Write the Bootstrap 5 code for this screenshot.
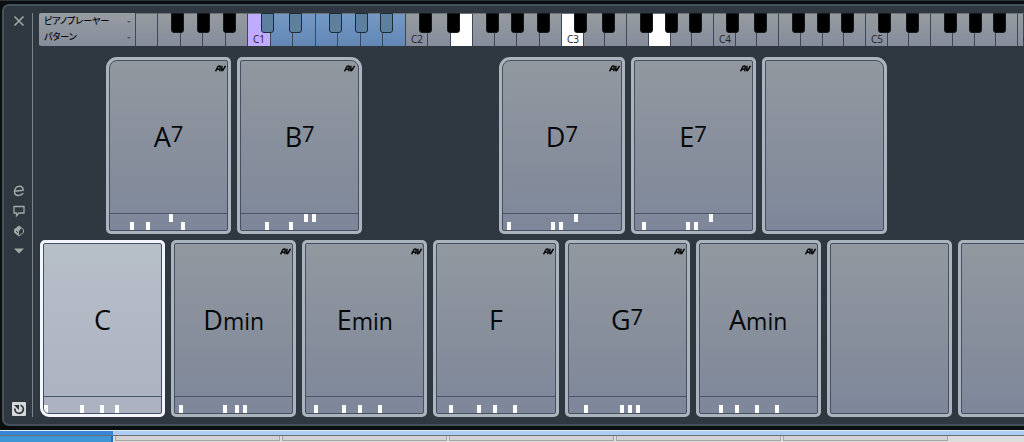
<!DOCTYPE html>
<html lang="ja">
<head>
<meta charset="utf-8">
<meta name="viewport" content="width=device-width, initial-scale=1">
<title>Chord Pads</title>
<link href="https://cdn.jsdelivr.net/npm/bootstrap@5.3.0/dist/css/bootstrap.min.css" rel="stylesheet">
<style>
body{background:#0b0e0f;font-family:"Open Sans","Noto Sans CJK JP",sans-serif;color:#050708}
.topline{height:1px;background:#2b343c;margin-bottom:3px}
.zone{margin-left:2px;background:#2f3841;border:2px solid #46515b;border-right:0;border-radius:7px 0 0 7px;padding:7px 0 7px}
.side{width:29px;border-right:1px solid #7c8388;color:#a0a9a6;padding-left:2px}
.side button,.pad,.key{padding:0;border:0;background:none;color:inherit}
.side button{line-height:0}
.side svg{display:block}
.closer{margin-top:2px}
.tools{margin-top:158px;gap:8px}
.reset{margin-top:auto;margin-bottom:1px}
.content{padding-left:6px;min-width:0}
.strip{height:33px}
.picker{width:97px;background:linear-gradient(#989da3,#868c9b);border-right:1px solid #3d475c;border-radius:2px 0 0 2px}
.picker label{display:block;height:16px;position:relative}
.picker select{display:block;width:100%;height:16px;appearance:none;border:0;background:none;padding:0 0 0 5px;font:500 9px/16px "Noto Sans CJK JP",sans-serif;font-feature-settings:"palt";color:#0a0c10}
.picker label::after{content:"";position:absolute;right:4px;top:8px;border:2px solid transparent;border-top-color:#505860;border-bottom:0}
.octave{min-width:0}
.key{flex:1 1 0;min-width:0;background:linear-gradient(#969b9f,#868c9b);border-right:1px solid #3d475c;border-top:1px solid #6c737a;display:flex;align-items:flex-end;font-size:10px;line-height:14px;padding-left:5px;color:#20242c}
.key.root{background:#c0acff}
.key.remote{background:linear-gradient(#7399c4,#6487b6)}
.key.held{background:#fff}
.ebony{position:absolute;top:0;width:13px;height:20px;padding:0;background:#000;border:1px solid #16191c;border-radius:0 0 3px 3px}
.ebony.remote{background:#5d809f;border-color:#1c2c38}
.board{display:grid;grid-template-columns:repeat(8,1fr);column-gap:6px;width:calc(100% + 58px);margin-left:1px}
.board.upper{margin-left:67px;margin-top:11px;margin-bottom:6px}
.pad{height:177px;border:3px solid #abb4bc;border-radius:5px;background:#abb4bc;display:block;color:#050708}
.face{display:flex;flex-direction:column;height:100%;border:1px solid #465063;border-radius:2px;background:linear-gradient(#92989f,#7e879a);overflow:hidden;position:relative}
.tl{border-top-left-radius:11px}.tr{border-top-right-radius:11px}.bl{border-bottom-left-radius:9px}
.tl .face{border-top-left-radius:8px}.tr .face{border-top-right-radius:8px}.bl .face{border-bottom-left-radius:6px}
.pad.lit{border-color:#f3f6fd;background:#f3f6fd}
.lit .face{background:linear-gradient(#b7bfc8,#acb1c1)}
.chord{flex:1;display:flex;justify-content:center;align-items:baseline;font-size:27px;line-height:36px;padding-top:58px}
.chord .kind{font-size:23px;line-height:30px}
.chord .seven{font-size:22px;line-height:22px;padding-bottom:5px;align-self:flex-start;padding-top:3px}
.notes{height:17px;border-top:1px solid #4b5569;position:relative;flex:none}
.notes i{position:absolute;bottom:0;width:4px;height:8px;background:#fff}
.notes i.high{bottom:8px}
.adaptive{position:absolute;right:1px;top:4px}
.tr .adaptive{right:3px}
.desk{margin-top:4px;height:13px;background:#dcdcdc}
.edge{height:6px;background:#b0cbf2;border-top:1px solid #dfeaf8;border-bottom:1px solid #6b7078}
.edge span,.tabs>span:first-child{width:11%}
.edge span{background:#3a86d6;display:block;height:100%}
.tabs{height:7px}
.tabs>span:first-child{background:#3f96d4;border-right:2px solid #2a6cb4}
.tabs .tab{flex:1;border:1px solid #a5a5a5;border-top:0;height:5px;background:#d2d2d2;margin-left:2px}
.tabs .rest{width:76px}
</style>
</head>
<body class="overflow-hidden">
<div class="topline"></div>
<main class="zone d-flex">
  <nav class="side d-flex flex-column align-items-center flex-shrink-0">
    <button class="closer" type="button" aria-label="Close"><svg width="12" height="12" viewBox="0 0 12 12" stroke="currentColor" stroke-width="1.600"><path d="M1.500 1.500l9 9M10.500 1.500l-9 9"/></svg></button>
    <div class="tools d-flex flex-column align-items-center">
      <button type="button" aria-label="Edit"><svg width="12" height="12" viewBox="0 0 12 12" fill="none" stroke="currentColor" stroke-width="1.500"><path d="M1.500 6.300L10 5.300C10.600 3 9 1.300 6.500 1.300 3.800 1.300 1.500 3.500 1.500 6.500 1.500 9 3 10.500 5.500 10.500 7.500 10.500 9 9.800 10.300 8.300"/></svg></button>
      <button type="button" aria-label="Comment"><svg width="12" height="12" viewBox="0 0 12 12" fill="none" stroke="currentColor" stroke-width="1.300"><path d="M1 1.500h10v6.500H6L3.500 10.800V8H1z"/></svg></button>
      <button type="button" aria-label="Presets"><svg width="12" height="12" viewBox="0 0 12 12"><path d="M6 1L10.500 4.500v3L6 11 1.500 7.500v-3z" fill="none" stroke="currentColor"/><path d="M6 1L1.500 4.500v3L6 11V6L8.500 3z" fill="currentColor"/><path d="M3 6l2 1.800" stroke="#2f3841"/></svg></button>
      <button type="button" aria-label="Menu"><svg width="12" height="12" viewBox="0 0 12 12"><path d="M1 3.500h10L6 8.500z" fill="currentColor"/></svg></button>
    </div>
    <button class="reset" type="button" aria-label="Reset"><svg width="14" height="14" viewBox="0 0 14 14"><rect width="14" height="14" rx="1" fill="#d5d9d9"/><path d="M8.500 3.200A4.200 4.200 0 1 1 3 6.500" fill="none" stroke="#2c353d" stroke-width="1.700"/><path d="M2 3h5v5z" fill="#2c353d"/></svg></button>
  </nav>
  <div class="content flex-grow-1 overflow-hidden">
    <div class="strip d-flex">
      <div class="picker flex-shrink-0">
        <label><select aria-label="Player"><option>ピアノプレーヤー</option></select></label>
        <label><select aria-label="Mode"><option>パターン</option></select></label>
      </div>
      <div id="keys" class="d-flex flex-grow-1"></div>
    </div>
    <div id="upper" class="board upper"></div>
    <div id="lower" class="board"></div>
  </div>
</main>
<footer class="desk">
  <div class="edge"><span></span></div>
  <div class="tabs d-flex"><span></span><span class="tab"></span><span class="tab"></span><span class="tab"></span><span class="tab"></span><span class="tab"></span><span class="rest"></span></div>
</footer>
<script src="https://cdn.jsdelivr.net/npm/bootstrap@5.3.0/dist/js/bootstrap.bundle.min.js"></script>
<script>
// Octaves: share of the strip's width, label, first white key, white key count, held keys
const octaves = [
  {w:112, from:2, n:5}, {w:158, label:'C1', from:0, n:7, remote:true},
  {w:156, label:'C2', from:0, n:7, held:[2]}, {w:152, label:'C3', from:0, n:7, held:[0,4]},
  {w:152, label:'C4', from:0, n:7}, {w:152, label:'C5', from:0, n:7}, {w:6, label:'C6', from:0, n:1}
];
const ebony = [8.2, 26.1, 51.1, 67.5, 83.8];
document.getElementById('keys').innerHTML = octaves.map(o => {
  let h = '';
  for (let k = o.from; k < o.from + o.n; k++) {
    let c = o.remote ? (k ? ' remote' : ' root') : '';
    if (o.held && o.held.includes(k)) c = ' held';
    h += `<button type="button" class="key${c}">${k === 0 && o.label ? o.label : ''}</button>`;
  }
  if (o.n > 1) ebony.forEach(p => {
    const left = (p * 7 - o.from * 100) / o.n;
    if (left > 0) h += `<button type="button" aria-label="Black key" class="ebony${o.remote ? ' remote' : ''}" style="left:${left.toFixed(1)}%"></button>`;
  });
  return `<div class="octave d-flex position-relative${o.n === 1 ? ' overflow-hidden' : ''}" style="flex:${o.w} 1 0">${h}</div>`;
}).join('');

// Pads: column, root, suffix, note positions (negative = upper octave), extra classes
const upper = [
  [1,'A','7',[20,36,-59,72],'tl'], [2,'B','7',[24,48,-63,-71],'tr'],
  [4,'D','7',[4,48,56,-71],'tl'], [5,'E','7',[8,52,60,-75],''], [6,'','',null,'tr']
];
const lower = [
  [1,'C','',[0,36,56,72],'bl lit'], [2,'D','min',[4,48,60,68],''], [3,'E','min',[8,36,52,72],''],
  [4,'F','',[12,40,56,76],''], [5,'G','7',[16,52,60,68],''], [6,'A','min',[20,36,56,76],''],
  [7,'','',null,''], [8,'','',null,'']
];
const mark = '<svg class="adaptive" width="11" height="7" viewBox="0 0 11 7" fill="none" stroke="#050708" stroke-width="1.500"><path d="M.5 6.300L3 1.500Q5.300.3 5.200 2L4.800 6.200M2 4.200h3M7 .8L6.700 5Q7 6.500 8 5L10.500.8"/></svg>';
const pad = ([col, root, kind, notes, cls]) => `<button type="button" aria-label="${root + kind || 'Empty'} pad" class="pad ${cls}" style="grid-column:${col}"><span class="face">
  ${root && !cls.includes('lit') ? mark : ''}
  <span class="chord">${root}${kind ? `<span class="${kind === '7' ? 'seven' : 'kind'}">${kind}</span>` : ''}</span>
  ${notes ? `<span class="notes">${notes.map(n => `<i${n < 0 ? ' class="high"' : ''} style="left:${(Math.abs(n) / 1.18).toFixed(1)}%"></i>`).join('')}</span>` : ''}
</span></button>`;
document.getElementById('upper').innerHTML = upper.map(pad).join('');
document.getElementById('lower').innerHTML = lower.map(pad).join('');
</script>
</body>
</html>
